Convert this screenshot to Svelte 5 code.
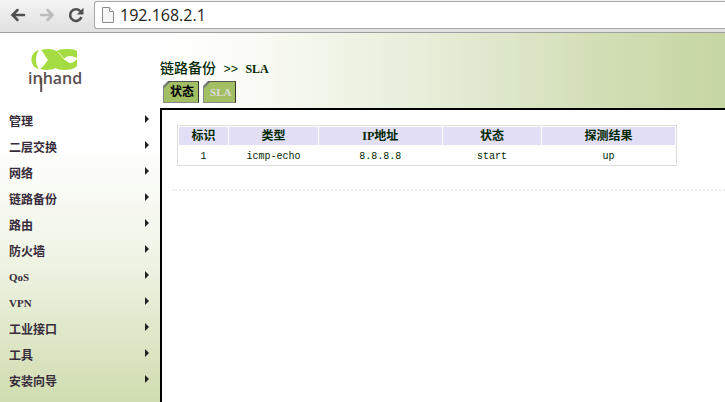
<script>
  const menu = [
    "管理",
    "二层交换",
    "网络",
    "链路备份",
    "路由",
    "防火墙",
    "QoS",
    "VPN",
    "工业接口",
    "工具",
    "安装向导",
  ];

  const tabs = ["状态", "SLA"];

  const columns = [
    { key: "id", label: "标识", width: 10 },
    { key: "type", label: "类型", width: 18 },
    { key: "ip", label: "IP地址", width: 25 },
    { key: "status", label: "状态", width: 20 },
    { key: "result", label: "探测结果", width: 27 },
  ];

  const rows = [
    { id: "1", type: "icmp-echo", ip: "8.8.8.8", status: "start", result: "up" },
  ];

  let address = $state("192.168.2.1");
  let activeTab = $state("状态");

  // Latin letters are set a little smaller than the Chinese ones
  const isLatin = (text) => /^[A-Za-z]+$/.test(text);
</script>

<div class="window">
  <div class="toolbar">
    <button class="tool" aria-label="Back">
      <svg width="16" height="14" viewBox="0 0 16 14">
        <path
          d="M7.5 2 2.5 7 7.5 12M3 7H14"
          fill="none"
          stroke="#505050"
          stroke-width="2.5"
          stroke-linecap="round"
        />
      </svg>
    </button>
    <button class="tool" aria-label="Forward">
      <svg width="16" height="14" viewBox="0 0 16 14">
        <path
          d="M8.5 2 13.5 7 8.5 12M13 7H2"
          fill="none"
          stroke="#bcbcbc"
          stroke-width="2.5"
          stroke-linecap="round"
        />
      </svg>
    </button>
    <button class="tool" aria-label="Reload">
      <svg width="16" height="16" viewBox="0 0 16 16">
        <path d="M12.2 4.2A5.8 5.8 0 1 0 13.4 10" fill="none" stroke="#505050" stroke-width="2.6" />
        <path d="M15.5 0.8V7.5H8.8Z" fill="#505050" />
      </svg>
    </button>
    <div class="address">
      <svg width="12" height="16" viewBox="0 0 12 16">
        <path d="M.5 .5H7.5L11.5 4.5V15.5H.5Z" fill="#f6f6f6" stroke="#8c8c8c" />
        <path d="M7.5 .5V4.5H11.5" fill="#fff" stroke="#8c8c8c" />
      </svg>
      <input type="text" aria-label="Address" bind:value={address} />
    </div>
  </div>

  <div class="page">
    <aside>
      <svg class="logo" width="64" height="46" viewBox="0 0 64 46">
        <path d="M12 1C2 3 2 18 12 20C8 15 8 6 12 1Z" fill="#a5dc42" />
        <path
          d="M14 1C21 -1 28 0 32 4C36 8 39 13 43 14C46 14 48 12 50 10V17C47 20 42 21 37 21C28 21 25 16 21 11C18 7 17 4 14 1Z"
          fill="#a5dc42"
        />
        <path
          d="M13 20C21 22 29 21 33 15C36 10 39 7 43 7C46 7 48 8 50 9V2C47 0 43 0 38 0C31 0 27 3 23 8C20 12 17 17 13 20Z"
          fill="#a5dc42"
        />
        <path d="M31 3C34 6 36 9 38 11" fill="none" stroke="#fff" stroke-width="0.8" />
        <text x="1" y="35">inhand</text>
        <path d="M14.2 29V43" stroke="#5b4f50" stroke-width="2" />
      </svg>
      <nav>
        <ul>
          {#each menu as item}
            <li>
              <a href="#menu">
                <span class:latin={isLatin(item)}>{item}</span>
                <svg width="4" height="8" viewBox="0 0 4 8">
                  <path d="M0 0 4 4 0 8Z" fill="#222" />
                </svg>
              </a>
            </li>
          {/each}
        </ul>
      </nav>
    </aside>

    <div class="main">
      <header>
        <h1>链路备份 <span class="sep">&gt;&gt;</span> <span class="leaf">SLA</span></h1>
        <div class="tabs">
          {#each tabs as tab}
            <button class="tab" class:active={tab === activeTab} onclick={() => (activeTab = tab)}>
              <span class:latin={isLatin(tab)}>{tab}</span>
            </button>
          {/each}
        </div>
      </header>

      <main>
        <table>
          <colgroup>
            {#each columns as column}
              <col style="width: {column.width}%" />
            {/each}
          </colgroup>
          <thead>
            <tr>
              {#each columns as column}
                <th>{column.label}</th>
              {/each}
            </tr>
          </thead>
          <tbody>
            {#each rows as row}
              <tr>
                {#each columns as column}
                  <td>{row[column.key]}</td>
                {/each}
              </tr>
            {/each}
          </tbody>
        </table>
        <hr />
      </main>
    </div>
  </div>
</div>

<style>
  :global(body) {
    margin: 0;
    font-family: "Liberation Serif", "Noto Sans CJK SC", serif;
    font-size: 12px;
    color: #002800;
  }

  .window {
    display: flex;
    flex-direction: column;
    min-height: 100vh;
  }

  .toolbar {
    display: flex;
    box-sizing: border-box;
    height: 33px;
    padding: 1px 0 3px 7px;
    border-bottom: 1px solid #a0a0a0;
    background: linear-gradient(to bottom, #f4f4f4, #e0e0e0);
  }

  .tool {
    display: flex;
    align-items: center;
    justify-content: center;
    width: 29px;
    height: 28px;
    padding: 0 8px 0 0;
    border: none;
    background: none;
  }

  .address {
    display: flex;
    flex: 1;
    align-items: center;
    gap: 6px;
    padding-left: 7px;
    border: 1px solid #a8a8a8;
    border-right: none;
    border-radius: 3px 0 0 3px;
    background: #fff;
  }

  .address input {
    flex: 1;
    min-width: 0;
    padding: 0;
    border: none;
    outline: none;
    background: none;
    font: 16px/24px "Open Sans", sans-serif;
    color: #222;
  }

  .page {
    display: flex;
    flex: 1;
  }

  aside {
    flex: none;
    width: 160px;
    background: linear-gradient(to bottom, #fff 30%, #f0f4e6 60%, #d0ddb0);
  }

  .logo {
    display: block;
    margin: 16px 0 14px 27px;
  }

  .logo text {
    font: 600 16px "Open Sans", sans-serif;
    fill: #5b4f50;
  }

  ul {
    margin: 0;
    padding: 0;
    list-style: none;
  }

  nav a {
    display: flex;
    justify-content: space-between;
    height: 26px;
    padding: 0 11px 0 9px;
    font-weight: bold;
    line-height: 26px;
    color: #382c3c;
    text-decoration: none;
  }

  nav svg {
    margin-top: 6px;
  }

  .latin {
    font-size: 11px;
  }

  nav .latin {
    line-height: 24px;
  }

  .main {
    display: flex;
    flex: 1;
    flex-direction: column;
    min-width: 0;
  }

  header {
    padding-top: 26px;
    background: linear-gradient(
      to right,
      #fff,
      #fbfcf8 14%,
      #f0f4e6 32%,
      #e0e9cf 57%,
      #d2deb5 78%,
      #c6d6a2
    );
  }

  h1 {
    margin: 0;
    font-size: 14px;
    font-weight: 500;
    line-height: 20px;
  }

  .sep {
    margin: 0 4px;
    font: 12px "Liberation Mono", monospace;
  }

  .leaf {
    font-size: 12px;
    font-weight: bold;
  }

  .tabs {
    display: flex;
    gap: 4px;
    padding: 2px 0 5px 3px;
  }

  .tab {
    height: 22px;
    padding: 0 4px 0 6px;
    border: 1px solid #888;
    border-right: 1px solid #333;
    border-top-color: #555;
    background: linear-gradient(135deg, #777 4px, #a3bf64 5px);
    clip-path: polygon(5px 0, 100% 0, 100% 100%, 0 100%, 0 5px);
    font: bold 12px/20px "Liberation Serif", "Noto Sans CJK SC", serif;
    color: #dcdcdc;
  }

  .tab.active {
    color: #000;
  }

  main {
    flex: 1;
    padding: 15px 0 0 15px;
    border-top: 2px solid #000;
    border-left: 2px solid #000;
    background: #fff;
  }

  table {
    width: 500px;
    max-width: 100%;
    table-layout: fixed;
    border: 1px solid #ddd;
    border-spacing: 1px;
  }

  th,
  td {
    padding: 0;
    line-height: 18px;
    text-align: center;
  }

  td {
    padding-top: 4px;
    font-family: "Liberation Mono", monospace;
    font-size: 10px;
    line-height: 14px;
  }

  th {
    background: #e2def6;
  }

  hr {
    height: 0;
    margin: 23px 0 0 -5px;
    border: none;
    border-top: 2px dotted #eee;
  }
</style>
